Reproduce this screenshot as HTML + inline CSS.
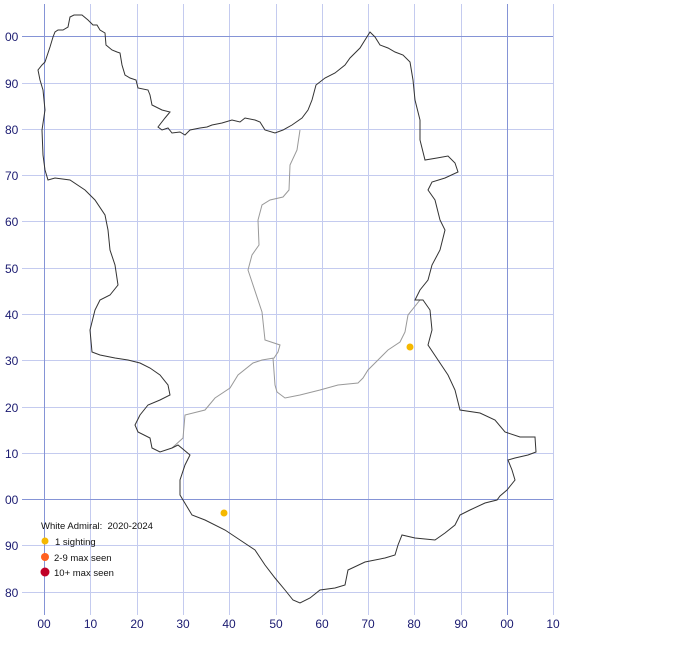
<!DOCTYPE html>
<html><head><meta charset="utf-8"><style>
html,body{margin:0;padding:0;background:#fff;width:696px;height:647px;overflow:hidden}
svg{display:block}
text{font-family:"Liberation Sans",sans-serif;font-size:12px;fill:#1a1a70}
.lg{font-size:9.5px;fill:#111;white-space:pre}
</style></head><body>
<svg width="696" height="647" viewBox="0 0 696 647">
<g stroke="#c4cbef" stroke-width="1" shape-rendering="crispEdges">
<line x1="90.5" y1="4" x2="90.5" y2="615"/><line x1="137.5" y1="4" x2="137.5" y2="615"/><line x1="183.5" y1="4" x2="183.5" y2="615"/>
<line x1="229.5" y1="4" x2="229.5" y2="615"/><line x1="276.5" y1="4" x2="276.5" y2="615"/><line x1="322.5" y1="4" x2="322.5" y2="615"/>
<line x1="368.5" y1="4" x2="368.5" y2="615"/><line x1="414.5" y1="4" x2="414.5" y2="615"/><line x1="461.5" y1="4" x2="461.5" y2="615"/>
<line x1="553.5" y1="4" x2="553.5" y2="615"/>
<line x1="22" y1="83.5" x2="553" y2="83.5"/><line x1="22" y1="129.5" x2="553" y2="129.5"/><line x1="22" y1="175.5" x2="553" y2="175.5"/>
<line x1="22" y1="221.5" x2="553" y2="221.5"/><line x1="22" y1="268.5" x2="553" y2="268.5"/><line x1="22" y1="314.5" x2="553" y2="314.5"/>
<line x1="22" y1="360.5" x2="553" y2="360.5"/><line x1="22" y1="407.5" x2="553" y2="407.5"/><line x1="22" y1="453.5" x2="553" y2="453.5"/>
<line x1="22" y1="545.5" x2="553" y2="545.5"/><line x1="22" y1="592.5" x2="553" y2="592.5"/>
</g>
<g stroke="#8594d6" stroke-width="1" shape-rendering="crispEdges">
<line x1="44.5" y1="4" x2="44.5" y2="615"/><line x1="507.5" y1="4" x2="507.5" y2="615"/>
<line x1="22" y1="36.5" x2="553" y2="36.5"/><line x1="22" y1="499.5" x2="553" y2="499.5"/>
</g>
<g fill="none" stroke="#999" stroke-width="1">
<polyline points="300,130 297,150 290,165 289,190 283,197 270,200 262,205 258,220 259,245 252,255 248,270 252,282 262,312 265,340 280,345 278,352 274,358 262,360 253,363 238,375 230,388 215,398 205,410 185,415 183,438 172,448"/>
<polyline points="273,358 275,385 277,392 285,398 300,395 320,390 338,385 358,383 363,378 368,370 378,360 388,350 400,342 405,332 408,315 420,300 423,300"/>
</g>
<polyline fill="none" stroke="#333" stroke-width="1" points="40,80 38,70 42,65 45,62 50,47 53,37 55,32 58,30 63,30 68,27 70,17 74,15 82,15 88,20 93,25 97,25 100,30 105,33 106,45 112,50 117,52 120,53 122,65 125,75 130,78 136,80 138,88 148,90 150,95 152,105 162,110 170,112 165,118 158,127 162,130 168,128 172,133 180,132 185,135 190,130 200,128 207,127 212,125 222,123 232,120 240,122 245,118 255,120 260,122 265,130 275,133 283,130 292,125 302,118 308,110 312,100 316,85 325,78 335,73 345,65 350,58 360,48 365,40 370,32 375,37 380,45 388,48 395,52 403,55 410,62 413,80 415,100 420,120 420,140 425,160 437,158 448,156 455,163 458,172 445,178 432,182 428,190 435,200 440,220 445,230 440,250 432,265 428,280 420,290 415,300 423,300 430,310 432,330 428,345 438,360 448,375 455,390 460,410 480,413 495,420 505,432 520,437 535,437 536,452 528,455 515,458 508,460 512,470 515,480 507,490 500,496 497,500 485,503 470,510 460,515 455,525 445,533 435,540 415,538 402,535 398,545 395,555 385,558 365,562 348,570 345,585 335,588 320,590 310,598 300,603 293,600 285,590 275,578 265,565 255,550 240,540 225,530 205,520 192,515 180,495 180,480 185,465 190,455 178,445 172,448 160,452 152,448 150,438 138,432 135,425 140,415 148,405 160,400 170,395 168,385 160,375 150,368 140,363 128,360 115,358 100,355 92,352 90,330 95,310 100,300 110,295 118,285 115,265 110,250 108,230 105,215 95,200 85,190 70,180 55,178 48,180 45,170 43,155 42,130 45,110 43,90 40,80"/>
<circle cx="410" cy="347" r="3.5" fill="#f5b800"/>
<circle cx="224" cy="513" r="3.5" fill="#f5b800"/>
<text class="lg" x="41" y="529">White Admiral:  2020-2024</text>
<circle cx="45" cy="541" r="3.5" fill="#f5b800"/><text class="lg" x="55" y="545">1 sighting</text>
<circle cx="45" cy="557" r="4" fill="#ff6020"/><text class="lg" x="54" y="561">2-9 max seen</text>
<circle cx="45" cy="572" r="4.5" fill="#c00028"/><text class="lg" x="54" y="576">10+ max seen</text>
<g text-anchor="start">
<text x="5" y="41">00</text><text x="5" y="88">90</text><text x="5" y="134">80</text><text x="5" y="180">70</text>
<text x="5" y="226">60</text><text x="5" y="273">50</text><text x="5" y="319">40</text><text x="5" y="365">30</text>
<text x="5" y="412">20</text><text x="5" y="458">10</text><text x="5" y="504">00</text><text x="5" y="550">90</text><text x="5" y="597">80</text>
</g>
<g text-anchor="middle">
<text x="44" y="628">00</text><text x="90.5" y="628">10</text><text x="137" y="628">20</text><text x="183" y="628">30</text>
<text x="229" y="628">40</text><text x="276" y="628">50</text><text x="322" y="628">60</text><text x="368" y="628">70</text>
<text x="414" y="628">80</text><text x="461" y="628">90</text><text x="507" y="628">00</text><text x="553" y="628">10</text>
</g>
</svg>
</body></html>
